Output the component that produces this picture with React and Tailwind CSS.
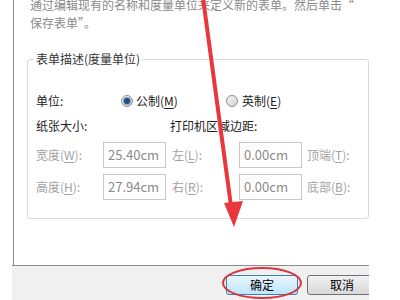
const FONT = { fontFamily: '"Noto Sans CJK SC", "Noto Sans", sans-serif' };

function U({ children }) {
  return <span className="underline underline-offset-2">{children}</span>;
}

function Radio({ checked }) {
  return (
    <span className="w-[12px] h-[12px] rounded-full border border-[#8e8f8f] bg-gradient-to-br from-[#f4f4f4] to-[#d4d4d4] flex items-center justify-center shrink-0">
      {checked && <span className="w-[6px] h-[6px] rounded-full bg-[#1e4f7f] ring-1 ring-[#7fa6c9]" />}
    </span>
  );
}

function Field({ value }) {
  return (
    <div className="w-[63px] h-[26px] border border-[#c9c9c9] bg-white flex items-center pl-[4px] text-[13px] text-[#8a8a8a]">
      {value}
    </div>
  );
}

export default function App() {
  return (
    <div className="w-[400px] h-[300px] bg-white relative overflow-hidden" style={FONT}>
      <div className="ml-[12px] w-[357px] h-[300px] flex flex-col">
        {/* dialog body */}
        <div className="h-[265px] border-l border-[#8c8c8c] ml-[1px] flex flex-col">
          <div className="mt-[-4px] pl-[16px] text-[12px] leading-[18px] text-[#8a8a8a] whitespace-nowrap">
            <p>通过编辑现有的名称和度量单位来定义新的表单。然后单击“</p>
            <p>保存表单”。</p>
          </div>

          <fieldset className="mt-[19px] ml-[13px] w-[342px] h-[168px] border border-[#d5dadd] rounded-[3px] px-[8px]">
            <legend className="ml-[-2px] px-[2px] text-[12px] leading-[16px] text-[#333]">表单描述(度量单位)</legend>

            <div className="mt-[26px] flex items-center text-[12px] leading-[16px] text-[#222]">
              <span className="w-[85px]">单位:</span>
              <Radio checked />
              <span className="ml-[3px] w-[90px]">公制(<U>M</U>)</span>
              <Radio />
              <span className="ml-[4px]">英制(<U>E</U>)</span>
            </div>

            <div className="mt-[9px] flex items-center text-[12px] leading-[16px] text-[#222]">
              <span className="w-[134px]">纸张大小:</span>
              <span>打印机区域边距:</span>
            </div>

            <div className="mt-[8px] flex items-center text-[12px] leading-[16px] text-[#a3a3a3]">
              <span className="w-[67px]">宽度(<U>W</U>):</span>
              <Field value="25.40cm" />
              <span className="ml-[6px] w-[67px]">左(<U>L</U>):</span>
              <Field value="0.00cm" />
              <span className="ml-[5px]">顶端(<U>T</U>):</span>
            </div>

            <div className="mt-[6px] flex items-center text-[12px] leading-[16px] text-[#a3a3a3]">
              <span className="w-[67px]">高度(<U>H</U>):</span>
              <Field value="27.94cm" />
              <span className="ml-[6px] w-[67px]">右(<U>R</U>):</span>
              <Field value="0.00cm" />
              <span className="ml-[5px]">底部(<U>B</U>):</span>
            </div>
          </fieldset>
        </div>

        {/* button strip */}
        <div className="h-[35px] bg-[#f0f0f0] border-t border-[#8c8c8c] flex items-start pt-[9px] pl-[214px] gap-[9px] overflow-hidden">
          <button className="w-[72px] h-[20px] shrink-0 rounded-[3px] border border-[#3c7fb1] bg-gradient-to-b from-[#eaf6fd] to-[#bee6fd] text-[12px] leading-[16px] text-black">
            确定
          </button>
          <button className="w-[75px] h-[20px] shrink-0 rounded-[3px] border border-[#707070] bg-gradient-to-b from-[#f2f2f2] to-[#d8d8d8] text-[12px] leading-[16px] text-black text-left pl-[22px]">
            取消
          </button>
        </div>
      </div>

      {/* red annotation */}
      <svg className="absolute inset-0 pointer-events-none" width="400" height="300" viewBox="0 0 400 300">
        <line x1="203" y1="-2" x2="231" y2="206" stroke="#e8383d" strokeWidth="4" strokeLinecap="round" />
        <polygon points="224,203 243,201 234,227" fill="#e8383d" />
        <ellipse cx="262" cy="283" rx="39" ry="15" fill="none" stroke="#d9363e" strokeWidth="2" />
      </svg>
    </div>
  );
}
